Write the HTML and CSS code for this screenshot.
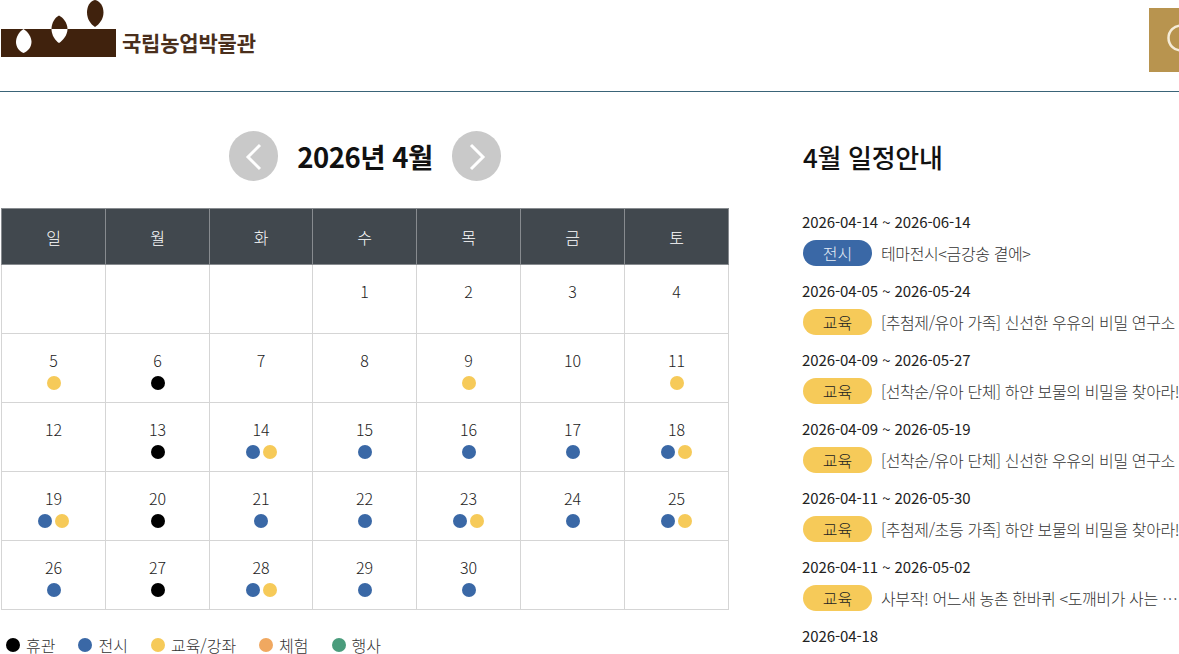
FILE: index.html
```html
<!DOCTYPE html>
<html lang="ko">
<head>
<meta charset="utf-8">
<title>국립농업박물관 - 일정안내</title>
<link rel="stylesheet" href="styles.css">
</head>
<body>
<header class="site-header">
  <a class="logo" href="#">
    <svg class="logo-mark" width="116" height="58" viewBox="0 0 116 58" aria-hidden="true">
      <rect x="1" y="29" width="115" height="28" fill="#40220d"/>
      <path d="M23.500 29 C19 32 16 37 16 42 C16 47 19 51 23.500 53 C28 51 31.500 47 31.500 42 C31.500 37 28 32 23.500 29Z" fill="#fff"/>
      <path d="M59 15.500 C55 17.500 51.500 23 51.500 29 L67.500 29 C67.500 23 63 17.500 59 15.500Z" fill="#40220d"/>
      <path d="M51.500 29 C51.500 35 55 40.500 59 43 C63 40.500 67.500 35 67.500 29Z" fill="#fff"/>
      <path d="M95 0 C90 1 87 6 87 12.500 C87 19 90.500 24 95 27 C99.500 24 103.500 19 103.500 12.500 C103.500 6 100 1 95 0Z" fill="#40220d"/>
    </svg>
    <span class="logo-text">국립농업박물관</span>
  </a>
  <button class="search-btn" type="button" aria-label="검색">
    <svg width="64" height="64" viewBox="0 0 64 64" aria-hidden="true">
      <circle cx="32" cy="30" r="12.500" fill="none" stroke="#f5ecd8" stroke-width="2.500"/>
      <path d="M41 39 L50 48" stroke="#f5ecd8" stroke-width="2.500"/>
    </svg>
  </button>
</header>

<main class="content">
  <section class="calendar">
    <div class="cal-nav">
      <button class="cal-arrow" type="button" aria-label="이전 달">
        <svg width="50" height="50" viewBox="0 0 50 50" aria-hidden="true"><path d="M31 14 L19 26 L31 38" fill="none" stroke="#fff" stroke-width="3"/></svg>
      </button>
      <h2 class="cal-title">2026년 4월</h2>
      <button class="cal-arrow" type="button" aria-label="다음 달">
        <svg width="50" height="50" viewBox="0 0 50 50" aria-hidden="true"><path d="M19 14 L31 26 L19 38" fill="none" stroke="#fff" stroke-width="3"/></svg>
      </button>
    </div>
    <table class="cal-table">
      <thead>
        <tr><th>일</th><th>월</th><th>화</th><th>수</th><th>목</th><th>금</th><th>토</th></tr>
      </thead>
      <tbody>
        <tr>
          <td></td><td></td><td></td>
          <td><span class="num">1</span></td>
          <td><span class="num">2</span></td>
          <td><span class="num">3</span></td>
          <td><span class="num">4</span></td>
        </tr>
        <tr>
          <td><span class="num">5</span><span class="dots"><i class="dot edu"></i></span></td>
          <td><span class="num">6</span><span class="dots"><i class="dot closed"></i></span></td>
          <td><span class="num">7</span></td>
          <td><span class="num">8</span></td>
          <td><span class="num">9</span><span class="dots"><i class="dot edu"></i></span></td>
          <td><span class="num">10</span></td>
          <td><span class="num">11</span><span class="dots"><i class="dot edu"></i></span></td>
        </tr>
        <tr>
          <td><span class="num">12</span></td>
          <td><span class="num">13</span><span class="dots"><i class="dot closed"></i></span></td>
          <td><span class="num">14</span><span class="dots"><i class="dot exhibit"></i><i class="dot edu"></i></span></td>
          <td><span class="num">15</span><span class="dots"><i class="dot exhibit"></i></span></td>
          <td><span class="num">16</span><span class="dots"><i class="dot exhibit"></i></span></td>
          <td><span class="num">17</span><span class="dots"><i class="dot exhibit"></i></span></td>
          <td><span class="num">18</span><span class="dots"><i class="dot exhibit"></i><i class="dot edu"></i></span></td>
        </tr>
        <tr>
          <td><span class="num">19</span><span class="dots"><i class="dot exhibit"></i><i class="dot edu"></i></span></td>
          <td><span class="num">20</span><span class="dots"><i class="dot closed"></i></span></td>
          <td><span class="num">21</span><span class="dots"><i class="dot exhibit"></i></span></td>
          <td><span class="num">22</span><span class="dots"><i class="dot exhibit"></i></span></td>
          <td><span class="num">23</span><span class="dots"><i class="dot exhibit"></i><i class="dot edu"></i></span></td>
          <td><span class="num">24</span><span class="dots"><i class="dot exhibit"></i></span></td>
          <td><span class="num">25</span><span class="dots"><i class="dot exhibit"></i><i class="dot edu"></i></span></td>
        </tr>
        <tr>
          <td><span class="num">26</span><span class="dots"><i class="dot exhibit"></i></span></td>
          <td><span class="num">27</span><span class="dots"><i class="dot closed"></i></span></td>
          <td><span class="num">28</span><span class="dots"><i class="dot exhibit"></i><i class="dot edu"></i></span></td>
          <td><span class="num">29</span><span class="dots"><i class="dot exhibit"></i></span></td>
          <td><span class="num">30</span><span class="dots"><i class="dot exhibit"></i></span></td>
          <td></td><td></td>
        </tr>
      </tbody>
    </table>
    <ul class="legend">
      <li><i class="dot closed"></i>휴관</li>
      <li><i class="dot exhibit"></i>전시</li>
      <li><i class="dot edu"></i>교육/강좌</li>
      <li><i class="dot exp"></i>체험</li>
      <li><i class="dot event"></i>행사</li>
    </ul>
  </section>

  <section class="schedule">
    <h2 class="schedule-title">4월 일정안내</h2>
    <ul class="schedule-list">
      <li><p class="date">2026-04-14 ~ 2026-06-14</p><div class="row"><span class="pill exhibit">전시</span><span class="name">테마전시&lt;금강송 곁에&gt;</span></div></li>
      <li><p class="date">2026-04-05 ~ 2026-05-24</p><div class="row"><span class="pill edu">교육</span><span class="name">[추첨제/유아 가족] 신선한 우유의 비밀 연구소</span></div></li>
      <li><p class="date">2026-04-09 ~ 2026-05-27</p><div class="row"><span class="pill edu">교육</span><span class="name">[선착순/유아 단체] 하얀 보물의 비밀을 찾아라!</span></div></li>
      <li><p class="date">2026-04-09 ~ 2026-05-19</p><div class="row"><span class="pill edu">교육</span><span class="name">[선착순/유아 단체] 신선한 우유의 비밀 연구소</span></div></li>
      <li><p class="date">2026-04-11 ~ 2026-05-30</p><div class="row"><span class="pill edu">교육</span><span class="name">[추첨제/초등 가족] 하얀 보물의 비밀을 찾아라!</span></div></li>
      <li><p class="date">2026-04-11 ~ 2026-05-02</p><div class="row"><span class="pill edu">교육</span><span class="name">사부작! 어느새 농촌 한바퀴 &lt;도깨비가 사는 …</span></div></li>
      <li><p class="date">2026-04-18</p></li>
    </ul>
  </section>
</main>
</body>
</html>
```
FILE: styles.css
```css
* { box-sizing: border-box; }
html, body { margin: 0; height: 654px; overflow: hidden; }
body {
  width: 1179px;
  background: #fff;
  color: #222;
  font-family: "Noto Sans CJK KR", "Noto Sans", sans-serif;
  font-weight: 300;
}
h2, p, ul { margin: 0; padding: 0; }
ul { list-style: none; }
button { border: 0; padding: 0; cursor: pointer; }

.site-header {
  height: 92px;
  border-bottom: 1px solid #3a6478;
  display: flex;
  justify-content: space-between;
  align-items: flex-start;
}
.logo {
  display: flex;
  align-items: flex-start;
  color: #4a2f1c;
  text-decoration: none;
}
.logo-mark { display: block; }
.logo-text {
  margin: 26px 0 0 6px;
  font-size: 21px;
  line-height: 32px;
  font-weight: 700;
  letter-spacing: -0.200px;
}
.search-btn {
  margin: 8px -34px 0 0;
  width: 64px;
  height: 64px;
  background: #b8944f;
  flex: none;
}
.search-btn svg { display: block; }

.content {
  display: flex;
  align-items: flex-start;
  padding: 39px 0 0 1px;
}
.calendar { width: 728px; flex: none; }
.cal-nav {
  height: 50px;
  display: flex;
  justify-content: center;
  align-items: center;
  gap: 18.600px;
  margin-bottom: 27px;
}
.cal-arrow {
  width: 49.500px;
  height: 50px;
  border-radius: 50%;
  background: #c9c9c9;
  flex: none;
}
.cal-arrow svg { display: block; }
.cal-title {
  width: 136px;
  font-size: 27.500px;
  line-height: 50px;
  font-weight: 700;
  color: #111;
  text-align: center;
  white-space: nowrap;
  letter-spacing: -0.500px;
}
.cal-table {
  width: 728px;
  table-layout: fixed;
  border-collapse: collapse;
}
.cal-table th {
  width: 104px;
  height: 56px;
  background: #41484e;
  color: #fff;
  font-size: 16px;
  font-weight: 300;
  border: 1px solid #878b8f;
  padding: 0;
}
.cal-table th:nth-child(3) { width: 103px; }
.cal-table td {
  height: 69px;
  border: 1px solid #d5d5d5;
  padding: 14px 0 0;
  text-align: center;
  vertical-align: top;
  font-size: 16px;
  color: #222;
}
.num { display: block; line-height: 24px; }
.dots {
  display: flex;
  justify-content: center;
  gap: 3px;
  margin-top: 4px;
}
.dot {
  display: block;
  width: 14px;
  height: 14px;
  border-radius: 50%;
  flex: none;
}
.dot.closed { background: #000; }
.dot.exhibit { background: #3a68a6; }
.dot.edu { background: #f6ca59; }
.dot.exp { background: #f0a860; }
.dot.event { background: #4a9c7c; }

.legend {
  display: flex;
  gap: 23px;
  margin: 26px 0 0 5px;
  font-size: 16px;
  line-height: 18px;
  color: #333;
}
.legend li {
  display: flex;
  align-items: center;
  gap: 6px;
}

.schedule {
  margin-left: 74px;
  width: 376px;
  flex: none;
}
.schedule-title {
  margin: 0;
  font-size: 26px;
  line-height: 52px;
  font-weight: 500;
  color: #111;
  letter-spacing: -0.300px;
}
.schedule-list { margin-top: 28px; }
.schedule-list li { height: 69px; }
.schedule-list li:last-child { height: auto; }
.date {
  margin-left: -1px;
  font-size: 15px;
  line-height: 22px;
  font-weight: 400;
  letter-spacing: -0.100px;
  color: #222;
}
.row {
  display: flex;
  align-items: center;
  gap: 9px;
  margin-top: 7px;
}
.pill {
  width: 69px;
  height: 26px;
  border-radius: 13px;
  font-size: 16px;
  line-height: 26px;
  text-align: center;
  flex: none;
}
.pill.exhibit { background: #3a68a6; color: #e6edf6; }
.pill.edu { background: #f6ca59; color: #222; }
.name {
  font-size: 16px;
  line-height: 26px;
  letter-spacing: -0.380px;
  color: #333;
  white-space: nowrap;
}
```
